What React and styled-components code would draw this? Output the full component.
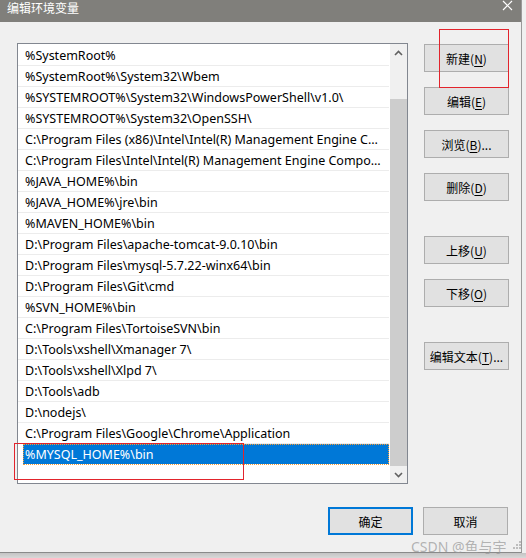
import React from 'react';
import styled, { createGlobalStyle } from 'styled-components';

const GlobalStyle = createGlobalStyle`
  html, body {
    margin: 0;
    padding: 0;
    background: #f0f0f0;
  }
  body {
    font-family: "Noto Sans", "Noto Sans CJK SC", sans-serif;
    font-size: 12px;
    color: #000;
  }
`;

const Page = styled.div`
  position: relative;
  width: 526px;
  height: 558px;
  overflow: hidden;
  background: #f0f0f0;
`;

const Window = styled.div`
  display: flex;
  flex-direction: column;
  width: 522px;
  height: 553px;
  background: #f0f0f0;
  border-right: 1px solid #9a9a9a;
  border-bottom: 1px solid #8a8a8a;
  box-sizing: border-box;
`;

const Shadow = styled.div`
  height: 5px;
  width: 526px;
  background: linear-gradient(#c4c4c4, #d8d8d8);
`;

const TitleBar = styled.div`
  display: flex;
  justify-content: space-between;
  align-items: flex-start;
  height: 22px;
  background: #807f7b;
  color: #fff;
  padding: 0 8px 0 7px;
  font-family: "Noto Sans CJK SC", sans-serif;
  font-size: 12px;
  line-height: 15px;
`;

const Close = styled.svg`
  width: 11px;
  height: 11px;
`;

const Body = styled.div`
  display: flex;
  flex: 1;
  padding: 21px 13px 0 17px;
  gap: 16px;
`;

const ListBox = styled.div`
  display: flex;
  width: 391px;
  height: 441px;
  box-sizing: border-box;
  border: 1px solid #828790;
  background: #fff;
`;

const Rows = styled.div`
  flex: 1;
  min-width: 0;
  padding-top: 1px;
`;

const Row = styled.div`
  height: 20px;
  line-height: 21px;
  font-size: 12.5px;
  border-bottom: 1px solid ${(p) => (p.selected ? '#fff' : '#ececec')};
  padding: 0 6px 0 ${(p) => (p.selected ? '2px' : '7px')};
  margin: 0 1px 0 ${(p) => (p.selected ? '5px' : '0')};
  white-space: nowrap;
  overflow: hidden;
  text-overflow: ellipsis;
  background: ${(p) => (p.selected ? '#0078d7' : 'transparent')};
  color: ${(p) => (p.selected ? '#fff' : '#000')};
  outline: ${(p) => (p.selected ? '1px dotted #f29b38' : 'none')};
  outline-offset: -1px;
`;

const ScrollBar = styled.div`
  display: flex;
  flex-direction: column;
  width: 17px;
  background: #f0f0f0;
`;

const Arrow = styled.div`
  display: flex;
  align-items: center;
  justify-content: center;
  height: 17px;
`;

const Track = styled.div`
  flex: 1;
  display: flex;
  flex-direction: column;
`;

const Thumb = styled.div`
  margin-top: 38px;
  flex: 1;
  background: #cdcdcd;
`;

const Side = styled.div`
  display: flex;
  flex-direction: column;
  gap: 15px;
  padding-top: 1px;
`;

const Button = styled.button`
  width: 85px;
  height: 28px;
  margin-top: ${(p) => (p.spaced ? '20px' : '0')};
  box-sizing: border-box;
  background: #e1e1e1;
  border: ${(p) => (p.primary ? '2px solid #0078d7' : '1px solid #adadad')};
  font-family: "Noto Sans CJK SC", sans-serif;
  font-size: 12px;
  color: #000;
  padding: 0;
  white-space: nowrap;
  cursor: default;
  u { text-decoration: underline; text-underline-offset: 2px; }
`;

const Footer = styled.div`
  display: flex;
  justify-content: flex-end;
  gap: 10px;
  padding: 0 13px 17px 0;
`;

const Mark = styled.div`
  position: absolute;
  border: 1px solid #e2242c;
  box-sizing: border-box;
  pointer-events: none;
`;

const Watermark = styled.div`
  position: absolute;
  left: 411px;
  top: 536px;
  color: rgba(150, 150, 150, 0.7);
  font-family: "Noto Sans", "Noto Sans CJK SC", sans-serif;
  font-size: 14px;
  white-space: nowrap;
  pointer-events: none;
`;

const Grip = styled.svg`
  position: absolute;
  left: 512px;
  top: 540px;
`;

const paths = [
  '%SystemRoot%',
  '%SystemRoot%\\System32\\Wbem',
  '%SYSTEMROOT%\\System32\\WindowsPowerShell\\v1.0\\',
  '%SYSTEMROOT%\\System32\\OpenSSH\\',
  'C:\\Program Files (x86)\\Intel\\Intel(R) Management Engine Components\\iCLS\\',
  'C:\\Program Files\\Intel\\Intel(R) Management Engine Components\\iCLS\\',
  '%JAVA_HOME%\\bin',
  '%JAVA_HOME%\\jre\\bin',
  '%MAVEN_HOME%\\bin',
  'D:\\Program Files\\apache-tomcat-9.0.10\\bin',
  'D:\\Program Files\\mysql-5.7.22-winx64\\bin',
  'D:\\Program Files\\Git\\cmd',
  '%SVN_HOME%\\bin',
  'C:\\Program Files\\TortoiseSVN\\bin',
  'D:\\Tools\\xshell\\Xmanager 7\\',
  'D:\\Tools\\xshell\\Xlpd 7\\',
  'D:\\Tools\\adb',
  'D:\\nodejs\\',
  'C:\\Program Files\\Google\\Chrome\\Application',
  '%MYSQL_HOME%\\bin',
];

const Chevron = ({ down }) => (
  <svg width="9" height="6" viewBox="0 0 9 6">
    <path
      d={down ? 'M1 1 L4.5 4.5 L8 1' : 'M1 5 L4.5 1.5 L8 5'}
      fill="none"
      stroke="#606060"
      strokeWidth="1.6"
    />
  </svg>
);

const Label = ({ text, hot, after = '' }) => (
  <>
    {text}(<u>{hot}</u>){after}
  </>
);

const App = () => (
  <Page>
    <GlobalStyle />
    <Window>
      <TitleBar>
        <span>编辑环境变量</span>
        <Close viewBox="0 0 11 11">
          <path d="M1 1 L10 10 M10 1 L1 10" stroke="#fff" strokeWidth="1.2" />
        </Close>
      </TitleBar>
      <Body>
        <ListBox>
          <Rows>
            {paths.map((p, i) => (
              <Row key={p} selected={i === paths.length - 1}>{p}</Row>
            ))}
          </Rows>
          <ScrollBar>
            <Arrow><Chevron /></Arrow>
            <Track><Thumb /></Track>
            <Arrow><Chevron down /></Arrow>
          </ScrollBar>
        </ListBox>
        <Side>
          <Button><Label text="新建" hot="N" /></Button>
          <Button><Label text="编辑" hot="E" /></Button>
          <Button><Label text="浏览" hot="B" after="..." /></Button>
          <Button><Label text="删除" hot="D" /></Button>
          <Button spaced><Label text="上移" hot="U" /></Button>
          <Button><Label text="下移" hot="O" /></Button>
          <Button spaced><Label text="编辑文本" hot="T" after="..." /></Button>
        </Side>
      </Body>
      <Footer>
        <Button primary>确定</Button>
        <Button>取消</Button>
      </Footer>
    </Window>
    <Shadow />
    <Mark style={{ left: 439, top: 29, width: 70, height: 59 }} />
    <Mark style={{ left: 14, top: 443, width: 230, height: 37 }} />
    <Watermark>CSDN @鱼与宇</Watermark>
    <Grip width="9" height="9" viewBox="0 0 9 9">
      <g fill="#bdbdbd">
        <rect x="7" y="1" width="2" height="2" />
        <rect x="4" y="4" width="2" height="2" />
        <rect x="7" y="4" width="2" height="2" />
        <rect x="1" y="7" width="2" height="2" />
        <rect x="4" y="7" width="2" height="2" />
        <rect x="7" y="7" width="2" height="2" />
      </g>
    </Grip>
  </Page>
);

export default App;
